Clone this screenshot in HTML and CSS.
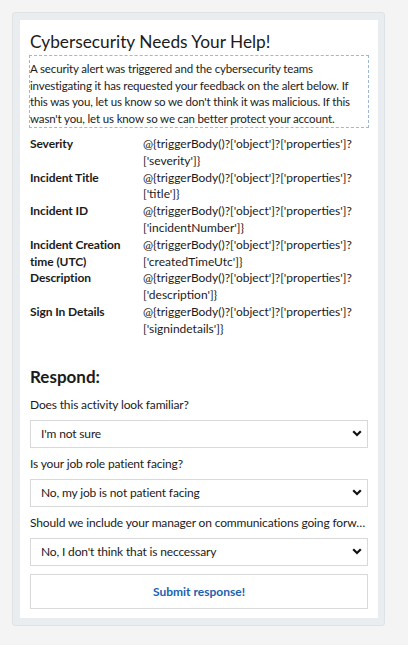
FILE: index.html
```html
<!DOCTYPE html>
<html>
<head>
<meta charset="utf-8">
<link rel="stylesheet" href="styles.css">
</head>
<body>
<div class="outer">
  <div class="card">
    <div class="title">Cybersecurity Needs Your Help!</div>
    <div class="intro">A security alert was triggered and the cybersecurity teams investigating it has requested your feedback on the alert below. If this was you, let us know so we don't think it was malicious. If this wasn't you, let us know so we can better protect your account.</div>
    <div class="facts">
      <div class="fk">Severity</div><div class="fv">@{triggerBody()?['object']?['properties']?<br>['severity']}</div>
      <div class="fk">Incident Title</div><div class="fv">@{triggerBody()?['object']?['properties']?<br>['title']}</div>
      <div class="fk">Incident ID</div><div class="fv">@{triggerBody()?['object']?['properties']?<br>['incidentNumber']}</div>
      <div class="fk">Incident Creation time (UTC)</div><div class="fv">@{triggerBody()?['object']?['properties']?<br>['createdTimeUtc']}</div>
      <div class="fk">Description</div><div class="fv">@{triggerBody()?['object']?['properties']?<br>['description']}</div>
      <div class="fk">Sign In Details</div><div class="fv">@{triggerBody()?['object']?['properties']?<br>['signindetails']}</div>
    </div>
    <div class="respond">Respond:</div>
    <div class="label">Does this activity look familiar?</div>
    <div class="select"><span>I'm not sure</span><svg class="chev" width="10" height="7" viewBox="0 0 10 7"><path d="M1.2 1.2 L5 5 L8.8 1.2" fill="none" stroke="#111" stroke-width="2.2"/></svg></div>
    <div class="label">Is your job role patient facing?</div>
    <div class="select"><span>No, my job is not patient facing</span><svg class="chev" width="10" height="7" viewBox="0 0 10 7"><path d="M1.2 1.2 L5 5 L8.8 1.2" fill="none" stroke="#111" stroke-width="2.2"/></svg></div>
    <div class="label">Should we include your manager on communications going forward?</div>
    <div class="select"><span>No, I don't think that is neccessary</span><svg class="chev" width="10" height="7" viewBox="0 0 10 7"><path d="M1.2 1.2 L5 5 L8.8 1.2" fill="none" stroke="#111" stroke-width="2.2"/></svg></div>
    <div class="button">Submit response!</div>
  </div>
</div>
</body>
</html>
```

FILE: styles.css
```css
html, body {
  margin: 0;
  padding: 0;
  background: #f4f4f4;
}
body {
  padding: 12px;
  font-family: "Lato", "Open Sans", sans-serif;
  font-size: 12px;
  letter-spacing: -0.15px;
  color: #1b1b1b;
}
.outer {
  width: 373px;
  box-sizing: border-box;
  background: #e9edf0;
  border: 1px solid #dfe3e6;
  border-radius: 3px;
  padding: 7px 6px 7px 7px;
}
.card {
  background: #ffffff;
  padding: 10px 10px 9px 10px;
  display: flex;
  flex-direction: column;
}
.title {
  font-size: 17.3px;
  letter-spacing: 0;
  line-height: 24px;
  color: #1b1b1b;
}
.intro {
  border: 1px dashed #9cb8d4;
  padding: 5px 0 0 0;
  font-size: 11.5px;
  letter-spacing: -0.15px;
  line-height: 16.5px;
  margin-top: 1px;
  margin-left: -1px;
  margin-right: -1px;
}
.facts {
  display: grid;
  grid-template-columns: 113px 1fr;
  line-height: 16.8px;
  margin-top: 8px;
}
.fk {
  font-weight: 700;
  font-size: 12px;
  letter-spacing: -0.1px;
  padding-right: 4px;
}
.fv {
  letter-spacing: 0;
}
.respond {
  font-size: 17px;
  font-weight: 700;
  letter-spacing: 0;
  line-height: 24px;
  margin-top: 27px;
}
.label {
  line-height: 16px;
  margin-top: 8px;
  white-space: nowrap;
  overflow: hidden;
  text-overflow: ellipsis;
}
.select {
  height: 28px;
  box-sizing: border-box;
  border: 1px solid #d9d9d9;
  margin-top: 7px;
  display: flex;
  align-items: center;
  justify-content: space-between;
  padding: 0 5px 0 10px;
}
.chev {
  display: block;
}
.button {
  margin-top: 8px;
  height: 35px;
  box-sizing: border-box;
  border: 1px solid #d9d9d9;
  display: flex;
  align-items: center;
  justify-content: center;
  font-weight: 700;
  letter-spacing: 0;
  color: #1a62b0;
}
```
